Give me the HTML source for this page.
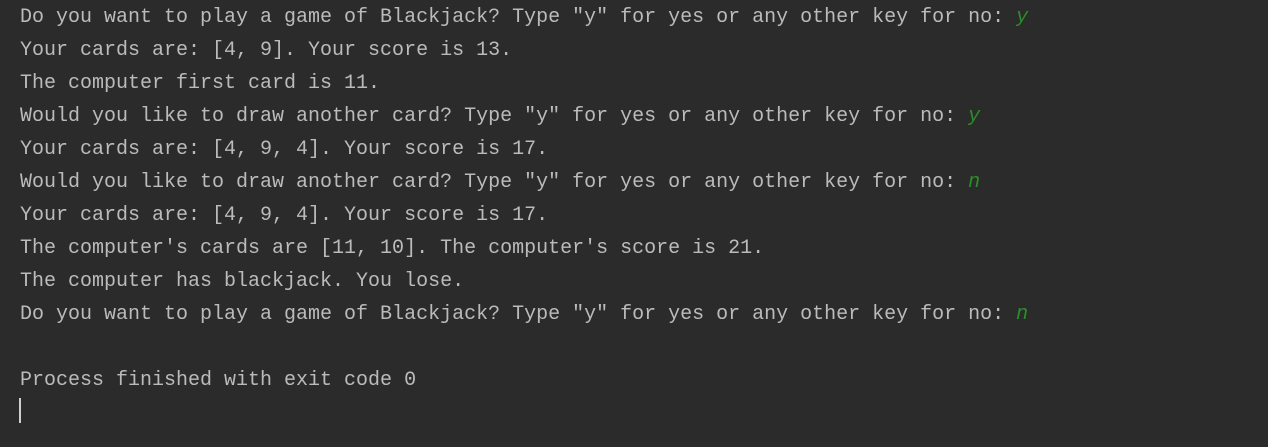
<!DOCTYPE html>
<html><head><style>
html,body{margin:0;padding:0;background:#2b2b2b;width:1268px;height:447px;overflow:hidden}
pre{margin:0;position:absolute;left:20px;top:1px;font-family:"Liberation Mono",monospace;font-size:20px;line-height:33px;color:#bbbbbb}
i{color:#2a8f2a}
.c{position:absolute;left:19px;top:398px;width:2px;height:25px;background:#cfcfcf}
</style></head><body>
<pre>Do you want to play a game of Blackjack? Type "y" for yes or any other key for no: <i>y</i>
Your cards are: [4, 9]. Your score is 13.
The computer first card is 11.
Would you like to draw another card? Type "y" for yes or any other key for no: <i>y</i>
Your cards are: [4, 9, 4]. Your score is 17.
Would you like to draw another card? Type "y" for yes or any other key for no: <i>n</i>
Your cards are: [4, 9, 4]. Your score is 17.
The computer's cards are [11, 10]. The computer's score is 21.
The computer has blackjack. You lose.
Do you want to play a game of Blackjack? Type "y" for yes or any other key for no: <i>n</i>

Process finished with exit code 0
</pre>
<div class="c"></div>
</body></html>
